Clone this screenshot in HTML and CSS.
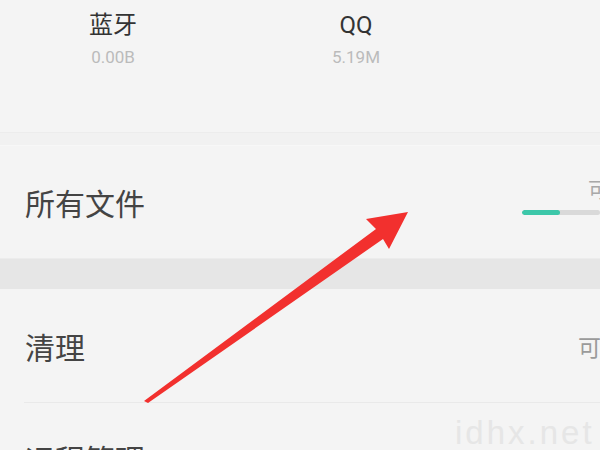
FILE: index.html
```html
<!DOCTYPE html>
<html lang="zh">
<head>
<meta charset="utf-8">
<link rel="stylesheet" href="styles.css">
</head>
<body>
<div class="page">
  <section class="apps">
    <div class="app">
      <div class="app-name">蓝牙</div>
      <div class="app-size">0.00B</div>
    </div>
    <div class="app">
      <div class="app-name">QQ</div>
      <div class="app-size">5.19M</div>
    </div>
  </section>
  <div class="thin-band"></div>
  <section class="row row-files">
    <div class="row-title">所有文件</div>
    <div class="storage">
      <div class="storage-label">可</div>
      <div class="bar"><div class="bar-fill" style="width:38px"></div></div>
    </div>
  </section>
  <div class="band"></div>
  <section class="row row-clean">
    <div class="row-title">清理</div>
    <div class="row-hint">可</div>
  </section>
  <section class="row row-remote">
    <div class="row-title">远程管理</div>
  </section>
  <div class="watermark">idhx.net</div>
  <svg class="arrow" width="600" height="450" viewBox="0 0 600 450">
    <path d="M144 401 L376 229 L366 219 L408 212 L389 249 L383 239 L148 403 Z" fill="#f2302e"/>
  </svg>
</div>
</body>
</html>
```
FILE: styles.css
```css
html, body {
  margin: 0;
  padding: 0;
  background: #f4f4f4;
}
body {
  font-family: Roboto, "Noto Sans CJK SC", "Noto Sans", sans-serif;
  color: #3c3c3c;
}
.page {
  position: relative;
  width: 600px;
  height: 450px;
  overflow: hidden;
}
.apps {
  display: flex;
  gap: 143px;
  padding: 9px 0 0 63px;
  border-bottom: 1px solid #ececec;
  box-sizing: border-box;
  height: 133px;
}
.app {
  width: 100px;
  display: flex;
  flex-direction: column;
  align-items: center;
}
.app-name {
  font-size: 24px;
  line-height: 32px;
  color: #333333;
}
.app-size {
  font-size: 17px;
  line-height: 22px;
  margin-top: 5px;
  color: #bbbbbb;
}
.thin-band {
  height: 12px;
  background: #f1f1f1;
  border-bottom: 1px solid #f7f7f7;
}
.row {
  display: flex;
  align-items: center;
  justify-content: space-between;
  padding-left: 25px;
  box-sizing: border-box;
}
.row-title {
  font-size: 30px;
  color: #444;
}
.row-files {
  height: 112px;
}
.storage {
  align-self: stretch;
  display: flex;
  flex-direction: column;
  align-items: flex-end;
  padding-top: 32px;
  width: 78px;
}
.storage-label {
  font-size: 21px;
  line-height: 24px;
  color: #a8a8a8;
  margin-right: -9px;
}
.bar {
  margin-top: 8px;
  width: 78px;
  height: 5px;
  border-radius: 3px;
  background: #d9d9d9;
  overflow: hidden;
}
.bar-fill {
  height: 100%;
  background: #3cc7a9;
  border-radius: 3px;
}
.band {
  height: 30px;
  background: #e6e6e6;
  border-top: 1px solid #ececec;
}
.row-clean {
  height: 114px;
  position: relative;
}
.row-clean::after {
  content: "";
  position: absolute;
  left: 24px;
  right: 0;
  bottom: 0;
  height: 1px;
  background: #e9e9e9;
}
.row-hint {
  font-size: 23px;
  color: #9a9a9a;
  margin-right: -1px;
}
.row-remote {
  height: 80px;
  align-items: flex-start;
  padding-top: 33px;
}
.watermark {
  position: absolute;
  left: 455px;
  top: 414px;
  font-size: 33px;
  color: #e6e6e6;
  font-family: "Liberation Sans", sans-serif;
  letter-spacing: 3px;
}
.arrow {
  position: absolute;
  left: 0;
  top: 0;
}
```
